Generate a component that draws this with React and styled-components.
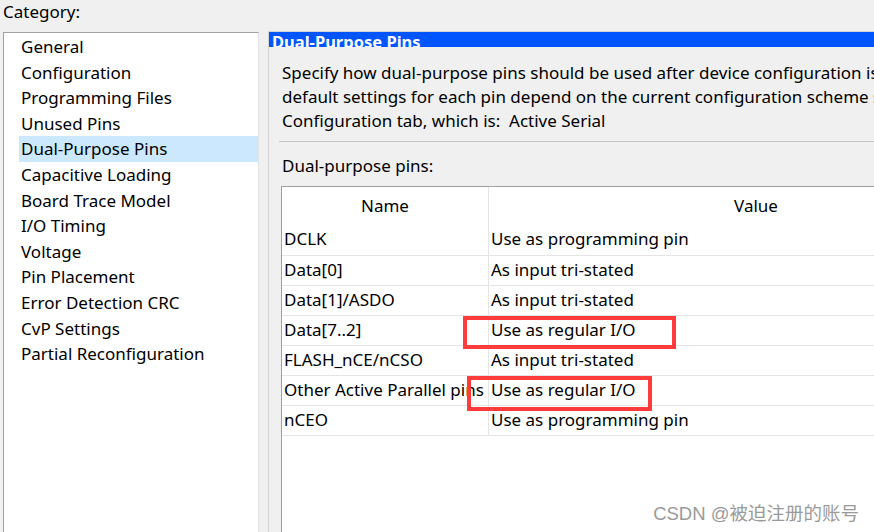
import React from "react";
import styled, { createGlobalStyle } from "styled-components";

const Global = createGlobalStyle`
  html, body { margin: 0; padding: 0; background: #f0f0f0; overflow: hidden; }
  body { font-family: "Noto Sans", "Open Sans", sans-serif; color: #000; }
`;

const Screen = styled.div`
  position: relative;
  width: 874px;
  height: 532px;
  overflow: hidden;
  background: #f0f0f0;
  font-size: 17px;
`;

const CategoryLabel = styled.div`
  height: 32px;
  line-height: 24px;
  padding-left: 3px;
`;

const Body = styled.div`
  display: flex;
  align-items: flex-start;
  height: 500px;
`;

const ListBox = styled.ul`
  margin: 0 0 0 3px;
  padding: 1px 0 0 15px;
  width: 239px;
  height: 540px;
  list-style: none;
  background: #fff;
  border: 1px solid #a0a0a0;
  border-right-color: #e3e3e3;
  flex: none;
`;

const ListItem = styled.li`
  height: 25.6px;
  line-height: 25.6px;
  padding-left: 2px;
  background: ${(p) => (p.$selected ? "#cce8ff" : "transparent")};
  white-space: nowrap;
`;

const Splitter = styled.div`
  width: 9px;
  flex: none;
`;

const Panel = styled.section`
  flex: 1;
  min-width: 0;
  height: 540px;
  border-left: 1px solid #d4d4d4;
  border-top: 1px solid #d4d4d4;
  margin-top: -1px;
`;

const PanelHeader = styled.div`
  height: 15px;
  overflow: hidden;
  background: #0055ff;
  color: #fff;
  font-weight: 700;
  font-size: 16.5px;
  line-height: 20px;
  padding-left: 3px;
  white-space: nowrap;
`;

const PanelContent = styled.div`
  padding: 14px 0 0 13px;
`;

const Description = styled.p`
  margin: 0;
  line-height: 24px;
  white-space: nowrap;
`;

const Separator = styled.hr`
  margin: 8px 0 0 -3px;
  border: 0;
  border-top: 1px solid #c8c8c8;
  height: 0;
`;

const SectionLabel = styled.div`
  margin-top: 12px;
  line-height: 24px;
  margin-bottom: 8px;
`;

const TableWrap = styled.div`
  position: relative;
  margin-left: -1px;
  height: 400px;
  background: #fff;
  border-left: 1px solid #a0a0a0;
  border-top: 1px solid #a0a0a0;
`;

const Table = styled.table`
  border-collapse: collapse;
  table-layout: fixed;
  width: 800px;
`;

const HeadCell = styled.th`
  font-weight: 400;
  height: 36px;
  padding: 0 0 2px;
  text-align: center;
  border-left: ${(p) => (p.$first ? "none" : "1px solid #e5e5e5")};
  width: ${(p) => p.$w || "auto"};
`;

const Row = styled.tr`
  height: 30px;
  border-bottom: 1px solid #e5e5e5;
`;

const Cell = styled.td`
  padding: 0 0 2px 2px;
  white-space: nowrap;
  overflow: hidden;
  border-left: ${(p) => (p.$first ? "none" : "1px solid #e5e5e5")};
`;

const Mark = styled.div`
  position: absolute;
  border: 4px solid #ff3b3b;
  box-sizing: border-box;
  pointer-events: none;
`;

const Watermark = styled.div`
  position: absolute;
  right: 15px;
  bottom: 7px;
  font-family: "Liberation Sans", "Noto Sans CJK SC", sans-serif;
  font-size: 18.5px;
  color: #9a9a9a;
  text-shadow: 0 0 1px #fff;
`;

const categories = [
  "General",
  "Configuration",
  "Programming Files",
  "Unused Pins",
  "Dual-Purpose Pins",
  "Capacitive Loading",
  "Board Trace Model",
  "I/O Timing",
  "Voltage",
  "Pin Placement",
  "Error Detection CRC",
  "CvP Settings",
  "Partial Reconfiguration",
];

const pins = [
  ["DCLK", "Use as programming pin"],
  ["Data[0]", "As input tri-stated"],
  ["Data[1]/ASDO", "As input tri-stated"],
  ["Data[7..2]", "Use as regular I/O"],
  ["FLASH_nCE/nCSO", "As input tri-stated"],
  ["Other Active Parallel pins", "Use as regular I/O"],
  ["nCEO", "Use as programming pin"],
];

export default function App() {
  return (
    <Screen>
      <Global />
      <CategoryLabel>Category:</CategoryLabel>
      <Body>
        <ListBox>
          {categories.map((c) => (
            <ListItem key={c} $selected={c === "Dual-Purpose Pins"}>
              {c}
            </ListItem>
          ))}
        </ListBox>
        <Splitter />
        <Panel>
          <PanelHeader>Dual-Purpose Pins</PanelHeader>
          <PanelContent>
            <Description>
              Specify how dual-purpose pins should be used after device configuration is complete. The
              <br />
              default settings for each pin depend on the current configuration scheme selected on the
              <br />
              Configuration tab, which is:&nbsp; Active Serial
            </Description>
            <Separator />
            <SectionLabel>Dual-purpose pins:</SectionLabel>
            <TableWrap>
              <Table>
                <thead>
                  <tr>
                    <HeadCell $first $w="206px">Name</HeadCell>
                    <HeadCell $w="534px">Value</HeadCell>
                    <HeadCell />
                  </tr>
                </thead>
                <tbody>
                  {pins.map(([n, v]) => (
                    <Row key={n}>
                      <Cell $first>{n}</Cell>
                      <Cell>{v}</Cell>
                      <Cell />
                    </Row>
                  ))}
                </tbody>
              </Table>
              <Mark style={{ left: 181, top: 129, width: 213, height: 33 }} />
              <Mark style={{ left: 185, top: 189, width: 185, height: 35 }} />
            </TableWrap>
          </PanelContent>
        </Panel>
      </Body>
      <Watermark>CSDN @被迫注册的账号</Watermark>
    </Screen>
  );
}
